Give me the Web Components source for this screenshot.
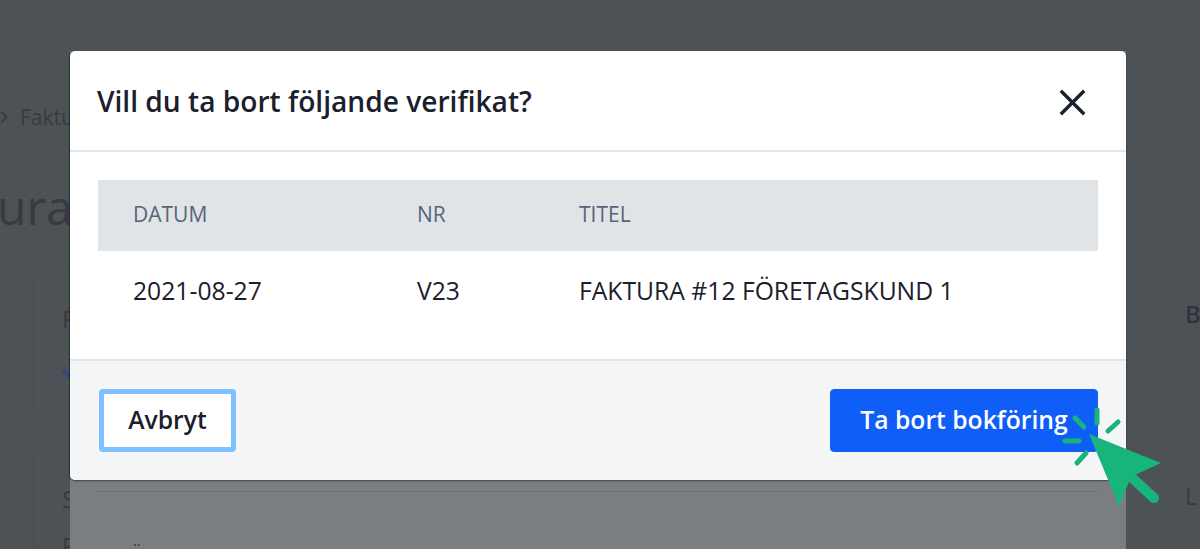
<!DOCTYPE html>
<html lang="sv">
<head>
<meta charset="utf-8">
<title>Ta bort verifikat</title>
<style>
    html, body { margin: 0; height: 100%; overflow: hidden; }
    body { font-family: "Open Sans", "Noto Sans", sans-serif; background: #93979a; position: relative; }
</style>
</head>
<body>
<back-page></back-page>
<modal-layer>
    <span slot="title">Vill du ta bort följande verifikat?</span>
    <verifikat-table></verifikat-table>
    <action-button slot="cancel" kind="focus">Avbryt</action-button>
    <action-button slot="confirm" kind="primary">Ta bort bokföring</action-button>
</modal-layer>
<click-cursor></click-cursor>

<script>
// Page behind the dialog, only the edges of it can be seen
class BackPage extends HTMLElement {
    constructor() {
        super();
        this.attachShadow({ mode: 'open' });
        this.shadowRoot.innerHTML = `
            <style>
                :host { display: block; height: 549px; overflow: hidden; color: #5d6064; }
                .crumb { display: flex; align-items: center; gap: 10px; height: 24px; margin-top: 105px; font-size: 21px; }
                .crumb svg { margin: 0; }
                .title { height: 56px; margin-top: 50px; font-size: 48px; line-height: 56px; margin-left: -3px; }
                .cols { display: flex; justify-content: space-between; margin-top: 35px; padding-left: 33px; }
                .col { display: flex; flex-direction: column; gap: 38px; width: 300px; }
                .col.right { width: 80px; margin-top: -1px; gap: 37px; }
                .card { border: 1px solid #868a8e; border-radius: 6px; height: 144px; padding: 31px 28px 0; box-sizing: border-box; font-size: 24px; line-height: 33px; }
                .card.tall { height: 200px; padding-top: 29px; }
                .right .card { border-width: 1px 0; border-radius: 0; padding: 27px 0 0 65px; height: 145px; }
                .right .strong { font-weight: 600; color: #4c5058; }
                b { font-weight: 400; display: block; }
                .lower { margin-top: 14px; }
                svg { display: block; margin-top: 33px; }
            </style>
            <div class="crumb">
                <svg width="10" height="14" viewBox="0 0 10 14"><path d="M1 1.5l5.5 5.5-5.5 5.5" fill="none" stroke="#5d6064" stroke-width="2"/></svg>
                <span>Faktu</span>
            </div>
            <div class="title">ura</div>
            <div class="cols">
                <div class="col">
                    <div class="card">
                        <b>F</b>
                        <svg width="14" height="10" viewBox="0 0 14 10"><path d="M1 2l6 6 6-6" fill="none" stroke="#4f85ee" stroke-width="4"/></svg>
                    </div>
                    <div class="card tall"><b>S</b><b class="lower">F</b></div>
                </div>
                <div class="col right">
                    <div class="card strong">B</div>
                    <div class="card tall">L</div>
                </div>
            </div>
        `;
    }
}

// The sheet under the dialog, the scrim, and the dialog on top of the page
class ModalLayer extends HTMLElement {
    constructor() {
        super();
        this.attachShadow({ mode: 'open' });
        this.shadowRoot.innerHTML = `
            <style>
                :host { display: block; position: absolute; inset: 0; overflow: hidden; }
                .under { position: absolute; left: 70px; width: 1056px; top: 51px; height: 600px; background: #fff; }
                .rule { position: absolute; left: 28px; right: 28px; top: 440px; height: 1px; background: #d5d9df; }
                .umlaut { position: absolute; left: 59px; top: 491px; font-size: 20px; color: #5a6270; }
                .scrim { position: absolute; inset: 0; background: rgba(26,32,38,.58); }
                .dialog { position: absolute; left: 70px; top: 51px; width: 1056px; height: 429px; background: #fff; border-radius: 5px; display: flex; flex-direction: column; overflow: hidden; color: #1a202c; box-shadow: 0 1px 2px rgba(0,0,0,.45), -1px 0 1px rgba(0,0,0,.35); }
                header { flex: none; height: 101px; box-sizing: border-box; display: flex; align-items: center; justify-content: space-between; padding: 0 40px 0 27px; border-bottom: 2px solid #e2e6ea; }
                h2 { margin: 0; font-size: 28.13px; font-weight: 600; line-height: 34px; }
                .close { display: block; position: relative; top: 2px; }
                .body { flex: 1; padding: 28px 28px 0; box-sizing: border-box; }
                footer { flex: none; height: 121px; box-sizing: border-box; display: flex; align-items: flex-start; justify-content: space-between; padding: 28px 28px 0 29px; background: #f4f5f7; border-top: 2px solid #e2e6ea; }
            </style>
            <div class="under"><div class="rule"></div><div class="umlaut">Ö</div></div>
            <div class="scrim"></div>
            <div class="dialog">
                <header>
                    <h2><slot name="title"></slot></h2>
                    <svg class="close" width="27" height="27" viewBox="0 0 27 27"><path d="M3 3l21 21M24 3L3 24" fill="none" stroke="#1a202c" stroke-width="3.4" stroke-linecap="square"/></svg>
                </header>
                <div class="body"><slot></slot></div>
                <footer>
                    <slot name="cancel"></slot>
                    <slot name="confirm"></slot>
                </footer>
            </div>
        `;
    }
}

class VerifikatTable extends HTMLElement {
    constructor() {
        super();
        this.attachShadow({ mode: 'open' });
        this.shadowRoot.innerHTML = `
            <style>
                :host { display: block; }
                .row { display: grid; grid-template-columns: 284px 162px 1fr; padding-left: 35px; align-items: center; }
                .head { height: 71px; background: #e1e4e7; color: #56657a; font-size: 21px; }
                .head span { position: relative; top: -2px; }
                .data { height: 81px; color: #1a202c; font-size: 24.7px; }
                .data span { position: relative; top: -1px; }
            </style>
            <div class="row head"><span>DATUM</span><span>NR</span><span>TITEL</span></div>
            <div class="row data"><span>2021-08-27</span><span>V23</span><span>FAKTURA #12 FÖRETAGSKUND 1</span></div>
        `;
    }
}

class ActionButton extends HTMLElement {
    constructor() {
        super();
        this.attachShadow({ mode: 'open' });
        this.shadowRoot.innerHTML = `
            <style>
                :host { display: block; }
                button { display: block; height: 63px; box-sizing: border-box; font: 600 24.7px "Open Sans", "Noto Sans", sans-serif; border-radius: 4px; padding: 0 0 2px; }
                :host([kind="focus"]) button { width: 137px; background: #fff; color: #1a202c; border: 5px solid #7fc0ff; }
                :host([kind="primary"]) button { width: 268px; background: #0f5ef7; color: #fff; border: 1px solid #0f5ef7; }
            </style>
            <button><slot></slot></button>
        `;
    }
}

// Green pointer that marks the button
class ClickCursor extends HTMLElement {
    constructor() {
        super();
        this.attachShadow({ mode: 'open' });
        this.shadowRoot.innerHTML = `
            <style>
                :host { display: block; position: absolute; left: 1050px; top: 400px; width: 130px; height: 120px; }
                svg { display: block; }
            </style>
            <svg width="130" height="120" viewBox="1050 400 130 120">
                <g fill="none" stroke="#17b47b" stroke-width="5" stroke-linecap="round">
                    <path d="M1075 418l9 9M1097 410v13M1108 431l10-9M1065 441h14M1077 463l9-10"/>
                    <path d="M1130 476l24 22" stroke-width="10"/>
                </g>
                <path d="M1089 434L1161 463L1137 474L1129 482L1119 506Z" fill="#17b47b"/>
            </svg>
        `;
    }
}

customElements.define('back-page', BackPage);
customElements.define('modal-layer', ModalLayer);
customElements.define('verifikat-table', VerifikatTable);
customElements.define('action-button', ActionButton);
customElements.define('click-cursor', ClickCursor);
</script>
</body>
</html>
